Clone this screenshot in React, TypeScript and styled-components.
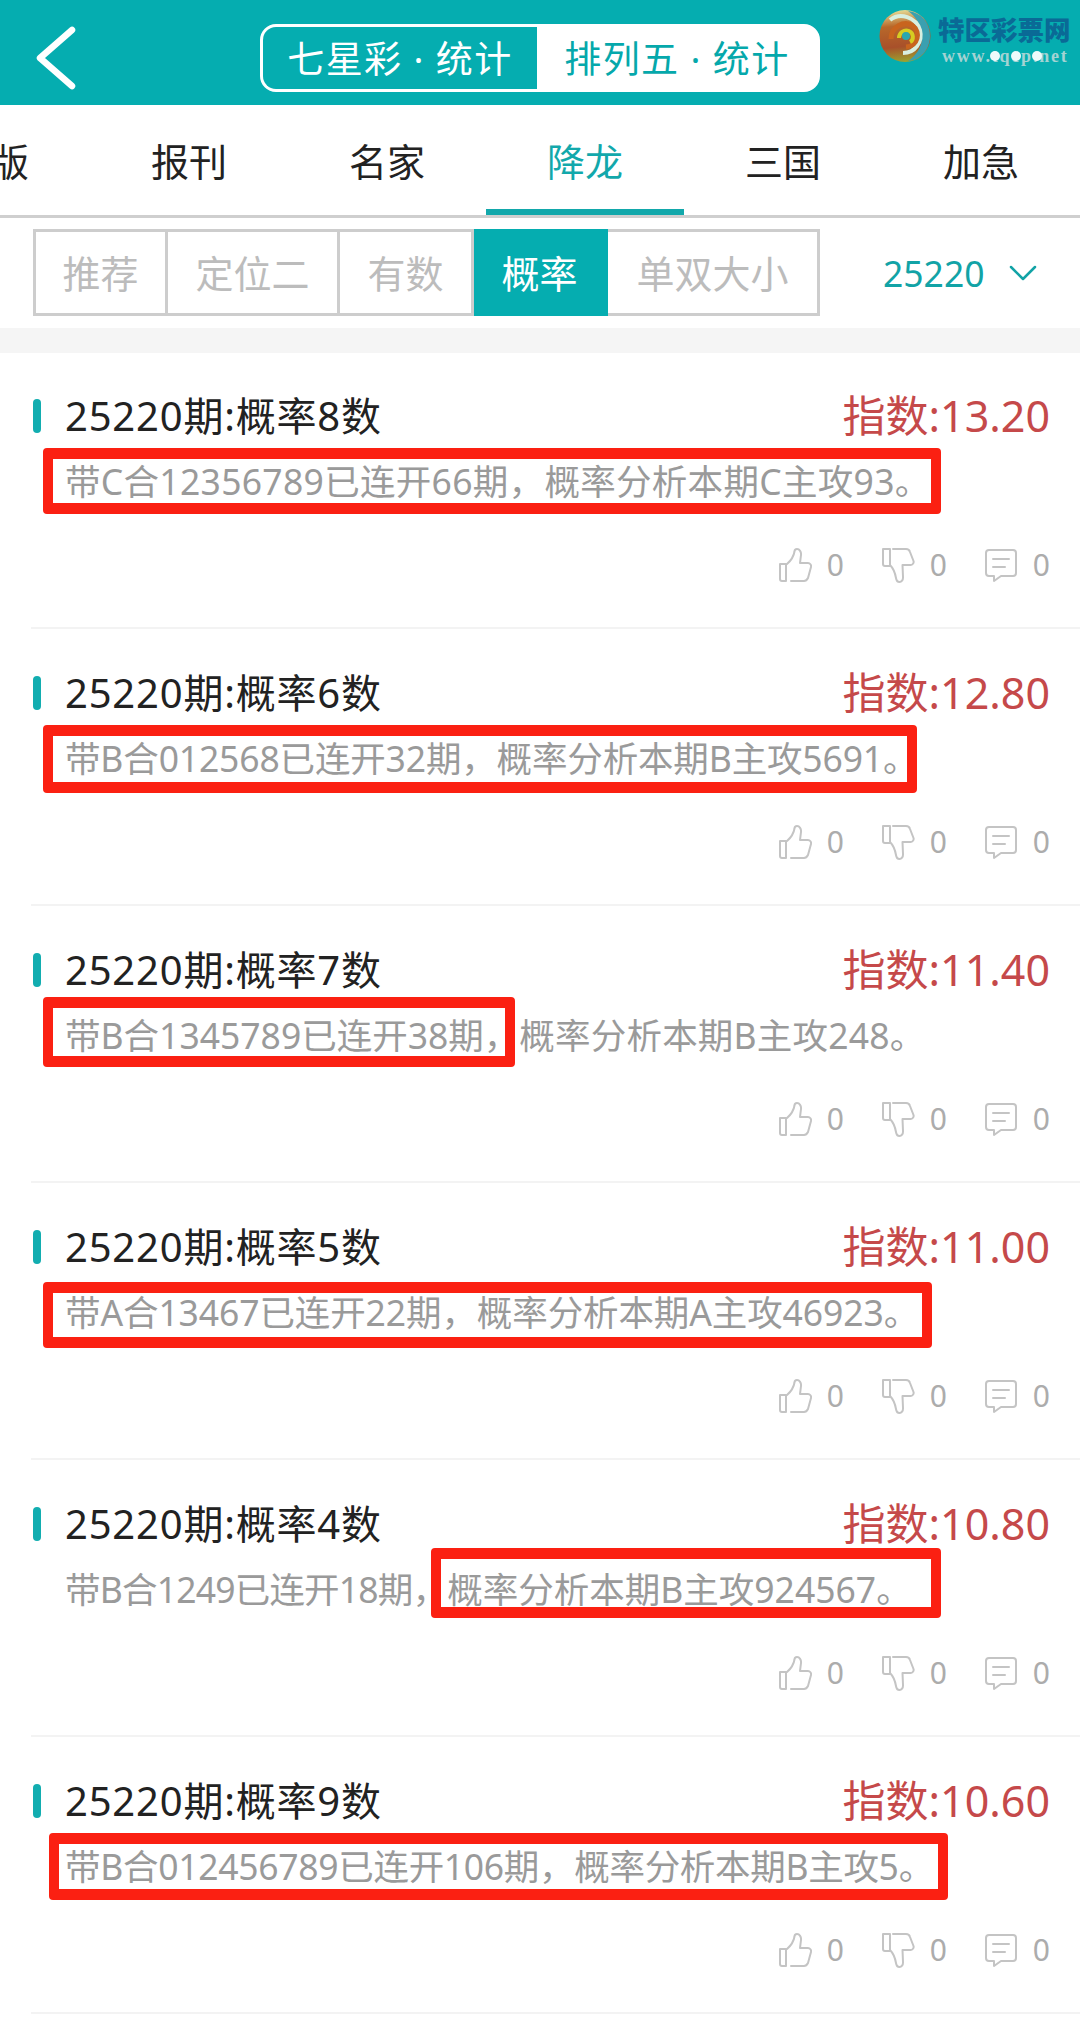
import React from "react";
import styled, { createGlobalStyle } from "styled-components";

const Global = createGlobalStyle`
  html, body { margin: 0; padding: 0; background: #fff; }
  * { box-sizing: border-box; }
  body { font-family: "Noto Sans", "Noto Sans CJK SC", sans-serif; }
`;

const Page = styled.div`
  width: 1080px;
  height: 2018px;
  overflow: hidden;
  background: #fff;
  position: relative;
`;

const Header = styled.header`
  height: 105px;
  background: #05adb0;
  display: grid;
  grid-template-columns: 260px 560px 1fr;
  align-items: start;
  position: relative;
`;

const Back = styled.div`
  padding: 26px 0 0 34px;
  display: flex;
  align-items: center;
`;

const Segment = styled.div`
  height: 68px;
  margin-top: 24px;
  border: 3px solid #fff;
  border-radius: 16px;
  background: #fff;
  display: grid;
  grid-template-columns: 274px 1fr;
  overflow: hidden;
`;

const SegmentItem = styled.div<{ $active?: boolean }>`
  display: flex;
  align-items: center;
  justify-content: center;
  font-size: 37px;
  line-height: 1;
  letter-spacing: 1.4px;
  background: ${(p) => (p.$active ? "#05adb0" : "#fff")};
  color: ${(p) => (p.$active ? "#fff" : "#05a8ab")};
`;

const Logo = styled.div`
  position: absolute;
  left: 878px;
  top: 8px;
  width: 200px;
  height: 60px;
  display: grid;
  grid-template-columns: 58px 1fr;
`;

const LogoText = styled.div`
  display: flex;
  flex-direction: column;
  align-items: flex-start;
  padding: 5px 0 0 2px;
`;

const LogoName = styled.div`
  font-size: 26.5px;
  line-height: 34px;
  font-weight: 900;
  color: #0a6a96;
  white-space: nowrap;
`;

const LogoUrl = styled.div`
  font-family: "Liberation Serif", serif;
  font-size: 18px;
  line-height: 18px;
  font-weight: 700;
  letter-spacing: 1.8px;
  color: #a4d3d3;
  white-space: nowrap;
  padding-left: 4px;
  position: relative;
`;

const LogoDots = styled.div`
  position: absolute;
  left: 52px;
  top: 4px;
  display: flex;
  gap: 11px;
`;

const LogoDot = styled.span`
  width: 10px;
  height: 10px;
  border-radius: 50%;
  background: #eefafa;
`;

const Tabs = styled.nav`
  height: 113px;
  display: flex;
  margin-left: -108px;
  position: relative;
  &::after {
    content: "";
    position: absolute;
    left: 0;
    right: 0;
    bottom: 0;
    height: 3px;
    background: #cfcfcf;
  }
`;

const Tab = styled.div<{ $active?: boolean }>`
  flex: 0 0 198px;
  height: 110px;
  padding-top: 34px;
  text-align: center;
  font-size: 38px;
  line-height: 44px;
  color: ${(p) => (p.$active ? "#12a8ab" : "#222")};
  border-bottom: 6px solid ${(p) => (p.$active ? "#12a8ab" : "transparent")};
`;

const FilterBar = styled.div`
  height: 110px;
  padding: 11px 0 0 33px;
  display: flex;
  align-items: flex-start;
`;

const FilterGroup = styled.div`
  display: flex;
  height: 87px;
  border: 3px solid #cdcdcd;
  width: 787px;
`;

const FilterItem = styled.div<{ $active?: boolean; $w: number }>`
  flex: 0 0 ${(p) => p.$w}px;
  display: flex;
  align-items: center;
  justify-content: center;
  font-size: 38px;
  line-height: 1;
  margin: ${(p) => (p.$active ? "-3px 0" : "0")};
  background: ${(p) => (p.$active ? "#05adb0" : "#fff")};
  color: ${(p) => (p.$active ? "#fff" : "#bcbcbc")};
  border-right: 3px solid ${(p) => (p.$active ? "#05adb0" : "#cdcdcd")};
  &:last-child { border-right: 0; }
`;

const Period = styled.div`
  margin-left: 63px;
  height: 87px;
  display: flex;
  align-items: center;
  gap: 24px;
  font-size: 35.5px;
  color: #12a3a6;
`;

const Band = styled.div`
  height: 25px;
  background: #f5f5f5;
`;

const Card = styled.article`
  height: 277px;
  padding: 37px 30px 0 33px;
  position: relative;
  &::after {
    content: "";
    position: absolute;
    left: 31px;
    right: 0;
    bottom: 1px;
    height: 2px;
    background: #f3f3f3;
  }
`;

const TitleRow = styled.div`
  display: flex;
  align-items: center;
  justify-content: space-between;
  height: 52px;
`;

const Title = styled.h3`
  margin: 0;
  display: flex;
  align-items: center;
  gap: 24px;
  font-size: 40px;
  line-height: 52px;
  font-weight: 400;
  color: #222;
  letter-spacing: 0.8px;
`;

const Marker = styled.i`
  display: block;
  width: 8px;
  height: 34px;
  border-radius: 4px;
  background: #12adb0;
`;

const Score = styled.div`
  font-size: 43px;
  line-height: 52px;
  color: #c5494a;
`;

const Desc = styled.p`
  margin: 17px 0 0;
  padding-left: 32px;
  font-size: 35.5px;
  line-height: 44px;
  color: #9a9a9a;
  white-space: nowrap;
`;

const Plain = styled.span<{ $ls: number }>`
  letter-spacing: ${(p) => p.$ls}px;
`;

const Mark = styled.span<{ $ls: number; $l: number; $r: number; $t: number; $b: number }>`
  position: relative;
  letter-spacing: ${(p) => p.$ls}px;
  &::after {
    content: "";
    position: absolute;
    left: ${(p) => -p.$l}px;
    right: ${(p) => -p.$r}px;
    top: ${(p) => -p.$t}px;
    bottom: ${(p) => -p.$b}px;
    border: solid #fb2012;
    border-width: 11px 10px;
    border-radius: 4px;
  }
`;

const Actions = styled.div`
  margin-top: 44px;
  height: 36px;
  display: flex;
  justify-content: flex-end;
`;

const Action = styled.div`
  display: flex;
  align-items: center;
  gap: 15px;
  width: 103px;
  justify-content: flex-end;
  font-size: 30px;
  line-height: 1;
  color: #acacac;
  svg { display: block; }
`;

const ThumbUp = () => (
  <svg width="34" height="36" viewBox="0 0 34 36" fill="none" stroke="#c4c4c4" strokeWidth="2" strokeLinejoin="round" strokeLinecap="round">
    <path d="M2 17h6v17H4a2 2 0 0 1-2-2z" />
    <path d="M13 34h13c2 0 3-1 4-3l3-11c.5-2-1-4-3-4h-8l1-8c.4-3-1.500-6-4-6-1.500 0-2.500 1-2.500 2.500-.8 5-3.500 9-7.500 12.500" />
  </svg>
);

const ThumbDown = () => (
  <svg width="34" height="36" viewBox="0 0 34 36" fill="none" stroke="#c4c4c4" strokeWidth="2" strokeLinejoin="round" strokeLinecap="round">
    <path d="M2 2h7v17H4a2 2 0 0 1-2-2z" />
    <path d="M12 2h13c2 0 3.500 1 4 3l3.500 9c.6 2-1 4-3 4h-8l.5 12c.2 3-1.500 5-3.500 5s-3.200-2-3.500-4c-.7-4-2-9-6-13" />
  </svg>
);

const Comment = () => (
  <svg width="34" height="36" viewBox="0 0 34 36" fill="none" stroke="#c4c4c4" strokeWidth="2" strokeLinejoin="round" strokeLinecap="round">
    <path d="M5 3h24a3 3 0 0 1 3 3v20a3 3 0 0 1-3 3H17l-7 5v-5H5a3 3 0 0 1-3-3V6a3 3 0 0 1 3-3z" />
    <path d="M9 12h16M9 20h12" />
  </svg>
);

const Chevron = () => (
  <svg width="28" height="18" viewBox="0 0 28 18" fill="none" stroke="#12a3a6" strokeWidth="2.500" strokeLinecap="round" strokeLinejoin="round">
    <path d="M2 3l12 12L26 3" />
  </svg>
);

const BackIcon = () => (
  <svg width="42" height="64" viewBox="0 0 42 64" fill="none" stroke="#fff" strokeWidth="6.500" strokeLinecap="round" strokeLinejoin="round">
    <path d="M38 4L6 32l32 28" />
  </svg>
);

const LogoMark = () => (
  <svg width="54" height="56" viewBox="0 0 54 56" fill="none">
    <defs>
      <linearGradient id="lg" x1="0.4" y1="0" x2="0.5" y2="1">
        <stop offset="0" stopColor="#e6dc96" />
        <stop offset="0.3" stopColor="#b8682a" />
        <stop offset="0.7" stopColor="#a8502a" />
        <stop offset="1" stopColor="#9aa52f" />
      </linearGradient>
    </defs>
    <ellipse cx="27" cy="28" rx="25.500" ry="26" fill="url(#lg)" />
    <path d="M30 3c14 2 22 12 22 25 0 14-10 24-22 25 8-5 14-14 14-24S38 8 30 3z" fill="#3aa0b0" />
    <path d="M12 12C22 4 38 9 42 22c3 12-5 23-17 23" stroke="#d8efe0" strokeWidth="4" />
    <path d="M13 31C13 19 26 12 35 18c8 6 5 20-7 21" stroke="#c8641e" strokeWidth="5" />
    <path d="M21 30c0-5 5-9 10-7 5 2 5 9 1 11" stroke="#d6cc22" strokeWidth="4" />
    <circle cx="28" cy="28" r="4" fill="#2aa7b0" />
  </svg>
);

type Part = { t: string; ls: number; m?: [number, number, number, number] };
type Row = { n: number; score: string; parts: Part[] };

const rows: Row[] = [
  { n: 8, score: "13.20", parts: [{ t: "带C合12356789已连开66期，概率分析本期C主攻93。", ls: 0.3, m: [22, 10, 9, 9] }] },
  { n: 6, score: "12.80", parts: [{ t: "带B合012568已连开32期，概率分析本期B主攻5691。", ls: -0.15, m: [22, -1, 9, 11] }] },
  { n: 7, score: "11.40", parts: [{ t: "带B合1345789已连开38期，", ls: 0, m: [22, -4, 14, 8] }, { t: "概率分析本期B主攻248。", ls: 0.2 }] },
  { n: 5, score: "11.00", parts: [{ t: "带A合13467已连开22期，概率分析本期A主攻46923。", ls: -0.1, m: [22, 13, 6, 12] }] },
  { n: 4, score: "10.80", parts: [{ t: "带B合1249已连开18期，", ls: -0.8 }, { t: "概率分析本期B主攻924567。", ls: 0, m: [16, 29, 17, 5] }] },
  { n: 9, score: "10.60", parts: [{ t: "带B合012456789已连开106期，概率分析本期B主攻5。", ls: -0.3, m: [16, 14, 9, 10] }] },
];

const tabs = ["图版", "报刊", "名家", "降龙", "三国", "加急"];
const filters: [string, number][] = [["推荐", 132], ["定位二", 172], ["有数", 134], ["概率", 134], ["单双大小", 209]];

export default function App() {
  return (
    <Page>
      <Global />
      <Header>
        <Back><BackIcon /></Back>
        <Segment>
          <SegmentItem $active>七星彩 · 统计</SegmentItem>
          <SegmentItem>排列五 · 统计</SegmentItem>
        </Segment>
        <Logo>
          <LogoMark />
          <LogoText>
            <LogoName>特区彩票网</LogoName>
            <LogoUrl>
              www.tqcp.net
              <LogoDots><LogoDot /><LogoDot /><LogoDot /></LogoDots>
            </LogoUrl>
          </LogoText>
        </Logo>
      </Header>
      <Tabs>
        {tabs.map((t) => (
          <Tab key={t} $active={t === "降龙"}>{t}</Tab>
        ))}
      </Tabs>
      <FilterBar>
        <FilterGroup>
          {filters.map(([t, w]) => (
            <FilterItem key={t} $w={w} $active={t === "概率"}>{t}</FilterItem>
          ))}
        </FilterGroup>
        <Period>25220<Chevron /></Period>
      </FilterBar>
      <Band />
      {rows.map((r) => (
        <Card key={r.n}>
          <TitleRow>
            <Title><Marker />25220期:概率{r.n}数</Title>
            <Score>指数:{r.score}</Score>
          </TitleRow>
          <Desc>
            {r.parts.map((p) =>
              p.m ? (
                <Mark key={p.t} $ls={p.ls} $l={p.m[0]} $r={p.m[1]} $t={p.m[2]} $b={p.m[3]}>{p.t}</Mark>
              ) : (
                <Plain key={p.t} $ls={p.ls}>{p.t}</Plain>
              )
            )}
          </Desc>
          <Actions>
            <Action><ThumbUp />0</Action>
            <Action><ThumbDown />0</Action>
            <Action><Comment />0</Action>
          </Actions>
        </Card>
      ))}
    </Page>
  );
}
